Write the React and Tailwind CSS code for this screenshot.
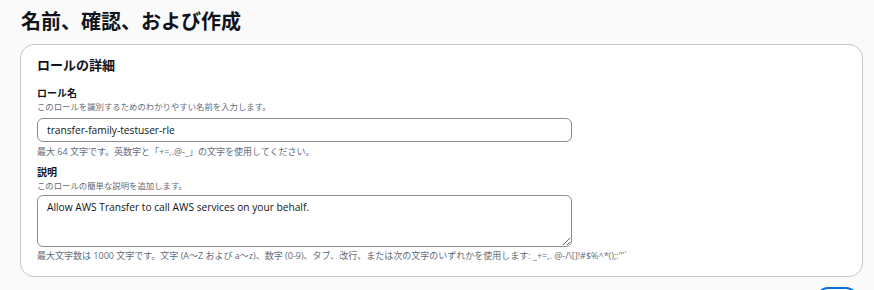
const font = { fontFamily: '"Open Sans", "Noto Sans CJK JP", sans-serif' };

export default function App() {
  return (
    <div
      className="min-h-[290px] w-full bg-[#fafafa] text-[#0f141a]"
      style={font}
    >
      <h1 className="pl-[21px] pt-[10px] text-[20px] font-bold leading-[24px]">
        名前、確認、および作成
      </h1>

      <div className="mx-[20px] mt-[10px] w-[843px] rounded-[14px] border border-[#c6c6cd] bg-white px-[16px] pb-[14px] pt-[12px]">
        <h2 className="text-[13px] font-bold leading-[16px]">ロールの詳細</h2>

        <div className="mt-[14px]">
          <div className="text-[10px] font-bold leading-[13px]">ロール名</div>
          <div className="mt-[1px] text-[8.4px] leading-[12px] text-[#5f6b7a]">
            このロールを識別するためのわかりやすい名前を入力します。
          </div>
          <input
            className="mt-[5px] h-[24px] w-[535px] rounded-[6px] border border-[#8c8c94] px-[9px] text-[10.2px] text-[#0f141a] outline-none"
            style={font}
            defaultValue="transfer-family-testuser-rle"
          />
          <div className="mt-[4px] text-[9px] leading-[12px] text-[#5f6b7a]">
            最大 64 文字です。英数字と「+=,.@-_」の文字を使用してください。
          </div>
        </div>

        <div className="mt-[8px]">
          <div className="text-[10px] font-bold leading-[13px]">説明</div>
          <div className="mt-[1px] text-[8.4px] leading-[11px] text-[#5f6b7a]">
            このロールの簡単な説明を追加します。
          </div>
          <textarea
            className="mt-[4px] block h-[52px] w-[535px] rounded-[6px] border border-[#8c8c94] px-[9px] py-[4px] text-[10.2px] leading-[14px] text-[#0f141a] outline-none"
            style={font}
            defaultValue="Allow AWS Transfer to call AWS services on your behalf."
          />
          <div className="mt-[3px] text-[9px] leading-[12px] text-[#5f6b7a]">
            最大文字数は 1000 文字です。文字 (A〜Z および a〜z)、数字 (0-9)、タブ、改行、または次の文字のいずれかを使用します: _+=,. @-/\[{}]!#$%^*();:"'`
          </div>
        </div>
      </div>

      <div className="mr-[16px] mt-[10px] flex justify-end pb-4">
        <button
          aria-label="次へ"
          className="h-[24px] w-[42px] rounded-full border-2 border-[#0972d3] bg-white"
        />
      </div>
    </div>
  );
}
